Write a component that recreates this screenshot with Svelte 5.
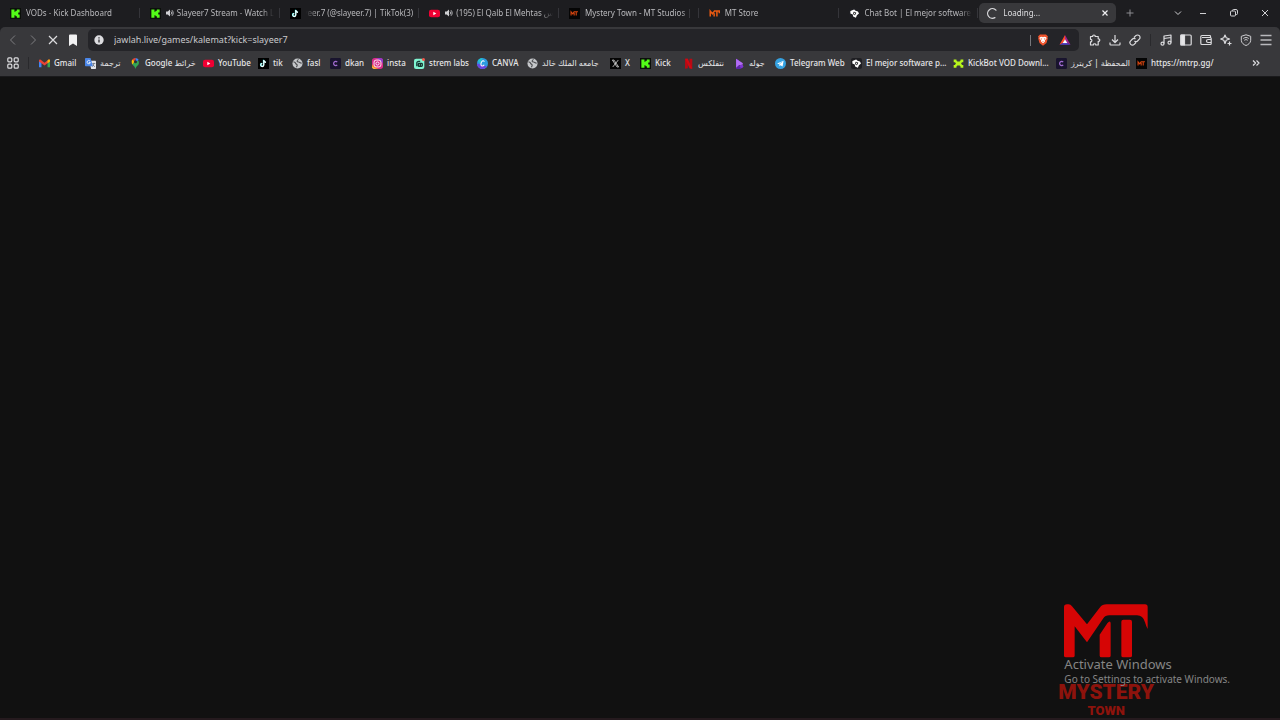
<script lang="ts">
    type Tab = {
        title: string;
        icon: string;
        audio?: boolean;
        active?: boolean;
        fromEnd?: boolean;
    };

    type Bookmark = { label: string; icon: string; width: number };

    const tabs: Tab[] = [
        { title: "VODs - Kick Dashboard", icon: "kick" },
        { title: "Slayeer7 Stream - Watch L", icon: "kick", audio: true },
        { title: "yeer.7 (@slayeer.7) | TikTok(3)", icon: "tiktok", fromEnd: true },
        { title: "(195) El Qalb El Mehtas س", icon: "youtube", audio: true },
        { title: "Mystery Town - MT Studios | M", icon: "mtbox" },
        { title: "MT Store", icon: "mt" },
        { title: "Chat Bot | El mejor software p", icon: "bot" },
        { title: "Loading...", icon: "spinner", active: true },
    ];

    // width is the slot each bookmark takes on the bar
    const bookmarks: Bookmark[] = [
        { label: "Gmail", icon: "gmail", width: 46 },
        { label: "ترجمة", icon: "translate", width: 45 },
        { label: "خرائط Google", icon: "maps", width: 73 },
        { label: "YouTube", icon: "youtube", width: 55 },
        { label: "tik", icon: "tiktok", width: 34 },
        { label: "fasl", icon: "globe", width: 38 },
        { label: "dkan", icon: "creators", width: 42 },
        { label: "insta", icon: "insta", width: 42 },
        { label: "strem labs", icon: "streamlabs", width: 63 },
        { label: "CANVA", icon: "canva", width: 50 },
        { label: "جامعه الملك خالد", icon: "globe", width: 83 },
        { label: "X", icon: "x", width: 30 },
        { label: "Kick", icon: "kick", width: 43 },
        { label: "نتفلكس", icon: "netflix", width: 51 },
        { label: "جوله", icon: "jawlah", width: 41 },
        { label: "Telegram Web", icon: "telegram", width: 76 },
        { label: "El mejor software p...", icon: "bot", width: 102 },
        { label: "KickBot VOD Downl...", icon: "kickbot", width: 103 },
        { label: "المحفظة | كريترز", icon: "creators", width: 80 },
        { label: "https://mtrp.gg/", icon: "mtbox", width: 76 },
    ];

    let url = $state("jawlah.live/games/kalemat?kick=slayeer7");
</script>

{#snippet icon(name: string)}
    <svg class="icon" viewBox="0 0 16 16" aria-hidden="true">
        {#if name === "kick"}
            <rect width="16" height="16" fill="#0b0f0a" />
            <path fill="#53fc18" d="M2 2h4.500v3.500H8V4h2V2h4v4.500h-2v3h2V14h-4v-2H8v-1.500H6.500V14H2z" />
        {:else if name === "tiktok"}
            <rect width="16" height="16" fill="#000" />
            <path d="M8.5 3v7.2a2.2 2.2 0 1 1-2.2-2.2M8.5 3.5c.3 1.7 1.3 2.6 3.2 2.8" fill="none" stroke="#25f4ee" stroke-width="1.8" transform="translate(-.5 -.3)" />
            <path d="M8.5 3v7.2a2.2 2.2 0 1 1-2.2-2.2M8.5 3.5c.3 1.7 1.3 2.6 3.2 2.8" fill="none" stroke="#fff" stroke-width="1.8" />
        {:else if name === "youtube"}
            <rect y="2.5" width="16" height="11" rx="3" fill="#f00033" />
            <path fill="#fff" d="M6.3 5.5v5l4.3-2.5z" />
        {:else if name === "mtbox"}
            <rect width="16" height="16" fill="#050505" />
            <path fill="none" stroke="#d8450f" stroke-width="1.6" d="M3 11V5.5l2.3 3 2.2-3H13M7.5 7v4M10.5 6v5" />
        {:else if name === "mt"}
            <path fill="none" stroke="#e85a12" stroke-width="2.2" d="M1.8 12.5V4.5L5 8.5l3-4h7v3M7.5 7.5v5M11.5 5v7.5" />
        {:else if name === "bot"}
            <rect width="16" height="16" rx="3" fill="#1e1e22" />
            <path fill="#fff" d="M2 4.500l5.500-2.500 2 2L13 5l1.500 3-3 2.500L10 14l-4-1.500-.5-3L2 8z" />
            <path d="M7 6l3 1-1.500 3-2-1z" fill="none" stroke="#17171a" stroke-width="1.200" />
        {:else if name === "spinner"}
            <path d="M13 3.200A7 7 0 1 0 11.500 14" fill="none" stroke="#d7d7da" stroke-width="1.800" stroke-linecap="round" />
        {:else if name === "gmail"}
            <path fill="#4285f4" d="M0 4v9.500h3.600V6z" />
            <path fill="#34a853" d="M16 4v9.500h-3.600V6z" />
            <path fill="#ea4335" d="M0 3.500C0 2 1.500 1.800 2.500 2.500L8 6.800l5.500-4.300C14.500 1.800 16 2 16 3.500V5l-8 6-8-6z" />
            <path fill="#fbbc04" d="M12.400 4l1.100-1.500C15 1.800 16 2.500 16 3.800V5l-3.600 2.700z" />
        {:else if name === "translate"}
            <path fill="#e4e6ea" d="M6 4h9a1 1 0 0 1 1 1v10a1 1 0 0 1-1 1H9z" />
            <path fill="#4a86e8" d="M1 0h7l3.500 12H1a1 1 0 0 1-1-1V1a1 1 0 0 1 1-1z" />
            <path d="M7.300 4.500a2.400 2.400 0 1 0 .5 2H5.500" fill="none" stroke="#fff" stroke-width="1.200" />
            <path d="M10.500 8H15M12.800 7v1c0 2-1 3.500-2 4.500M11.500 9.500c.5 1.500 1.500 2.500 3 3.200" fill="none" stroke="#5a6675" />
        {:else if name === "maps"}
            <path fill="#34a853" d="M3 7c0 4 4 4.500 5 9 1-4.500 5-5 5-9a5 5 0 0 0-1-3.500z" />
            <path fill="#4285f4" d="M8 0a5.500 5.500 0 0 1 4.600 2.500L8 7z" />
            <path fill="#ea4335" d="M3.500 2.200A5.600 5.600 0 0 1 8.500 0L6 6z" />
            <path fill="#fbbc04" d="M3.500 9.500C2 7 2 4 3.500 2.200l3 2.800z" />
            <circle cx="8" cy="5.600" r="2.200" fill="#2d3033" />
        {:else if name === "globe"}
            <circle cx="8" cy="8" r="7.300" fill="#c5c7ca" />
            <path d="M2 5.500c2 .5 3 1 3.500 2.500s2 1 2 2.500-1 2-1 3M9.500 2c-2 1.500-2.500 2-2 3s2 .5 3 1 1.500 1.500 3.500 1.500" fill="none" stroke="#48494c" stroke-width="1.600" />
        {:else if name === "creators"}
            <rect width="16" height="16" rx="2" fill="#19142e" />
            <path d="M10.500 6A3 3 0 1 0 10.500 10" fill="none" stroke="#a06bd0" stroke-width="1.800" />
        {:else if name === "insta"}
            <rect width="16" height="16" rx="4" fill="#d92b8a" />
            <path fill="#f77a35" d="M0 9l9 7H4a4 4 0 0 1-4-4z" />
            <path fill="#f9c544" d="M0 12l6 4H4a4 4 0 0 1-4-4z" />
            <path fill="#9538c8" d="M7 0h5a4 4 0 0 1 4 4v4z" />
            <rect x="3" y="3" width="10" height="10" rx="3" fill="none" stroke="#fff" stroke-width="1.300" />
            <circle cx="8" cy="8" r="2.300" fill="none" stroke="#fff" stroke-width="1.300" />
        {:else if name === "streamlabs"}
            <rect y="1" width="15" height="15" rx="3" fill="#80f5d2" />
            <path d="M4 12V8a3 3 0 0 1 3-3h2" fill="none" stroke="#153e38" stroke-width="1.800" />
            <rect x="5" y="7" width="8" height="6" rx="2" fill="#14352f" />
            <path d="M8 9v2M11 9v2" stroke="#80f5d2" />
            <circle cx="13.800" cy="2.200" r="2.200" fill="#f2554a" />
        {:else if name === "canva"}
            <circle cx="8" cy="8" r="8" fill="#2c9be0" />
            <path fill="#6d43e0" d="M0 8a8 8 0 0 0 8 8c3 0 5-1 6.500-3.500z" />
            <path fill="#22c3cf" d="M1 4.500A8 8 0 0 1 8 0L5 8z" />
            <path d="M10.500 5.500c0-2-2.500-1.800-3.700 0S5 11 7 11.500s3-1 3.500-1.800" fill="none" stroke="#fff" stroke-width="1.500" />
        {:else if name === "x"}
            <rect width="16" height="16" fill="#050505" />
            <path d="M3.500 3h2.300l6.700 10h-2.300zM12 3l-8 10" fill="none" stroke="#e8e8e8" stroke-width="1.100" />
        {:else if name === "netflix"}
            <path fill="#b80a14" d="M3 1h4v14L3 15.500zM9.500 1h4v14.500L9.500 15z" />
            <path fill="#d10812" d="M3 1h4l6.500 14.500L9.500 15z" />
        {:else if name === "jawlah"}
            <path fill="#5c22a8" d="M3 1l4 2v8l6 2-3 3H3z" />
            <path fill="#b26cf5" d="M3 1l10 6.500-1 2.500-5 .5L3 14z" />
            <circle cx="11" cy="12" r="2.500" fill="#7e37ce" />
        {:else if name === "telegram"}
            <circle cx="8" cy="8" r="8" fill="#35a1e0" />
            <path fill="#fff" d="M3 8l9.500-4-1.500 8.500-3-2-1.500 1.500-.3-3z" />
            <path d="M6 9l4.500-3.500" stroke="#35a1e0" stroke-width=".8" />
        {:else if name === "kickbot"}
            <path fill="#b6f51d" d="M1 2h4v2h1v1h4V4h1V2h4v4h-2v1h-1v2h1v1h2v4h-4v-2h-1v-1H6v1H5v2H1v-4h2V9h1V7H3V6H1z" />
        {/if}
    </svg>
{/snippet}

<div class="browser">
    <header>
        <div class="tab-strip">
            <div class="tabs" role="tablist">
                {#each tabs as tab}
                    <button class="tab" class:active={tab.active} role="tab" aria-selected={!!tab.active}>
                        {@render icon(tab.icon)}
                        {#if tab.audio}
                            <svg class="audio" viewBox="0 0 16 16" aria-label="Playing audio">
                                <path fill="currentColor" d="M0 5h3.500L8 1v14l-4.500-4H0z" />
                                <path d="M10 5c1.500 1.500 1.500 4.500 0 6M12 2.500c3 3 3 8 0 11" fill="none" stroke="currentColor" stroke-width="1.800" />
                            </svg>
                        {/if}
                        <span class="title" class:from-end={tab.fromEnd}><span>{tab.title}</span></span>
                        {#if tab.active}
                            <svg class="close" viewBox="0 0 8 8" aria-label="Close tab"><path d="M1.500 1.500l5 5m0-5l-5 5" /></svg>
                        {/if}
                    </button>
                {/each}
            </div>
            <button class="new-tab" aria-label="New tab">
                <svg class="line dim" viewBox="0 0 12 12"><path d="M6 2.500v7M2.500 6h7" /></svg>
            </button>
            <div class="window-buttons">
                <button class="search-tabs" aria-label="Search tabs">
                    <svg class="line" viewBox="0 0 12 12"><path d="M3 4.500l3 3 3-3" /></svg>
                </button>
                <button aria-label="Minimize"><svg class="line" viewBox="0 0 12 12"><path d="M3 6.500h6" /></svg></button>
                <button aria-label="Restore">
                    <svg class="line" viewBox="0 0 12 12"><rect x="2.500" y="4" width="5" height="5" rx="1" /><path d="M4.500 4V3.500a1 1 0 0 1 1-1H8a1.500 1.500 0 0 1 1.500 1.500v2.500a1 1 0 0 1-1 1H8" /></svg>
                </button>
                <button aria-label="Close"><svg class="line" viewBox="0 0 12 12"><path d="M3 3l6 6m0-6l-6 6" /></svg></button>
            </div>
        </div>

        <div class="toolbar">
            <button aria-label="Back" disabled><svg class="line" viewBox="0 0 12 12"><path d="M8 1.500L3.500 6 8 10.500" /></svg></button>
            <button aria-label="Forward" disabled><svg class="line" viewBox="0 0 12 12"><path d="M4 1.500L8.500 6 4 10.500" /></svg></button>
            <button aria-label="Stop"><svg class="line strong" viewBox="0 0 12 12"><path d="M2 2l8 8m0-8l-8 8" /></svg></button>
            <button aria-label="Bookmark"><svg viewBox="0 0 12 12"><path fill="#f2f2f3" d="M3 .5h6a1 1 0 0 1 1 1V12L6 9.500 2 12V1.500a1 1 0 0 1 1-1z" /></svg></button>
            <div class="address">
                <svg class="info" viewBox="0 0 16 16"><circle cx="8" cy="8" r="7.500" fill="#dcdce0" /><path d="M8 7v5M8 3.500v2" stroke="#27272b" stroke-width="2" /></svg>
                <input type="text" aria-label="Address" spellcheck="false" bind:value={url} />
                <span class="divider light"></span>
                <button aria-label="Brave Shields">
                    <svg viewBox="0 0 12 12">
                        <path fill="#f0532b" d="M3 .5h6l2 2-.5 1 .3 1L9.500 9 6 11.800 2.500 9 1.200 4.500l.3-1-.5-1z" />
                        <path fill="#fff" d="M2.800 3.200l2-.4L6 3.200l1.200-.4 2 .4.3 1.300-1.700 2 .2 1L6 9.200 4 7.500l.2-1-1.700-2z" />
                        <path fill="#f0532b" d="M3.500 4.300l1.800.5-.8 1zM8.500 4.300l-1.800.5.8 1zM5 7h2l-1 .8z" />
                    </svg>
                </button>
                <button class="rewards" aria-label="Brave Rewards">
                    <svg viewBox="0 0 12 12">
                        <path fill="#ff4724" d="M6 1v4.500L3.800 9 .5 10.800z" />
                        <path fill="#a0218c" d="M6 1l5.500 9.800L8.200 9 6 5.500z" />
                        <path fill="#5640c8" d="M.5 10.800L3.800 9h4.400l3.300 1.800z" />
                        <path fill="#fff" d="M6 5.200L8.300 9H3.700z" />
                    </svg>
                </button>
            </div>
            <button aria-label="Extensions">
                <svg class="line strong" viewBox="0 0 12 12"><path d="M1.500 2.500h2.200c-.3-2 2.800-2 2.500 0h3v2.300c2.100-.3 2.100 2.900 0 2.600v3.600H6.800c.2-1.700-2.700-1.700-2.400 0H1.500V7.800c1.800.2 1.800-2.700 0-2.500z" /></svg>
            </button>
            <button aria-label="Downloads"><svg class="line strong" viewBox="0 0 12 12"><path d="M6 1v7M3 5.500l3 3 3-3M1 8.500v1.700c0 .5.300.8.800.8h8.400c.5 0 .8-.3.800-.8V8.500" /></svg></button>
            <button aria-label="Copy link"><svg class="line strong" viewBox="0 0 12 12"><path d="M5 3.500l1.800-1.800a2.400 2.400 0 0 1 3.500 3.500L8.500 7a2.200 2.200 0 0 1-3 0M7 8.500l-1.800 1.800a2.400 2.400 0 0 1-3.500-3.500L3.500 5a2.200 2.200 0 0 1 3 0" /></svg></button>
            <span class="divider"></span>
            <button aria-label="Playlist"><svg class="line strong" viewBox="0 0 12 12"><path d="M4 9.500V2l7-1v7.500M4 4.500l7-1" /><circle cx="2.500" cy="9.700" r="1.500" /><circle cx="9.500" cy="8.700" r="1.500" /></svg></button>
            <button aria-label="Sidebar"><svg class="line strong" viewBox="0 0 12 12"><rect x=".8" y="1" width="10.400" height="10" rx="1" /><path fill="#e6e6e8" d="M1 1h3.500v10H1z" /></svg></button>
            <button aria-label="Wallet"><svg class="line strong" viewBox="0 0 12 12"><path d="M10.500 3.500V2.300c0-.5-.3-.8-.8-.8H2A1.200 1.200 0 0 0 .8 2.700v6.500c0 .8.500 1.300 1.200 1.300h8.200c.6 0 1-.4 1-1V4.500c0-.6-.4-1-1-1H2M11 5.500H8a1.500 1.500 0 0 0 0 3h3" /></svg></button>
            <button aria-label="Leo AI"><svg class="line strong" viewBox="0 0 12 12"><path d="M5 1l1.200 2.800L9.500 5 6.200 6.200 5 9.500 3.800 6.200.7 5l3.100-1.200zM9.500 7.500v4M7.500 9.500h4" /></svg></button>
            <button aria-label="VPN"><svg class="line" viewBox="0 0 12 12"><path d="M6 .8l4.700 1.500v4C10.700 9 8 10.800 6 11.500 4 10.800 1.300 9 1.300 6.300v-4z" /><path d="M3.300 4.500c1.500-1.300 3.900-1.300 5.400 0M4.300 6.300c1-.9 2.400-.9 3.400 0M6 8v.3" /></svg></button>
            <button aria-label="Menu"><svg class="menu" viewBox="0 0 12 12"><path d="M.5 1.500h11M.5 6h11M.5 10.500h11" /></svg></button>
        </div>

        <nav class="bookmarks" aria-label="Bookmarks">
            <button class="apps" aria-label="Apps">
                <svg class="line strong" viewBox="0 0 12 12"><rect x=".8" y=".8" width="4" height="4" rx="1" /><rect x="7.200" y=".8" width="4" height="4" rx="1" /><rect x=".8" y="7.200" width="4" height="4" rx="1" /><rect x="7.200" y="7.200" width="4" height="4" rx="1" /></svg>
            </button>
            <span class="divider"></span>
            <div class="bookmark-list">
                {#each bookmarks as bookmark}
                    <a href="#{bookmark.icon}" style:width="{bookmark.width}px">
                        {@render icon(bookmark.icon)}
                        <span dir="auto">{bookmark.label}</span>
                    </a>
                {/each}
            </div>
            <button class="more" aria-label="More bookmarks"><svg class="line strong" viewBox="0 0 12 12"><path d="M3 3.500L5.500 6 3 8.500M6.500 3.500L9 6 6.500 8.500" /></svg></button>
        </nav>
    </header>

    <main></main>

    <div class="watermark">
        <svg class="logo" viewBox="0 0 252 160" role="img" aria-label="MT">
            <path fill="#d60505" d="M0 154V8Q0 0 9 0H14Q20 0 24 6L69 60 107 10Q115 0 128 0H243Q251 0 251 8V74Q247 68 243 54 237 33 219 33H136Q124 33 117 43L69 114 32 66V154Q32 159 26 159H6Q0 159 0 154z" />
            <path fill="#d60505" d="M107 91L130 57Q139 46 140 57V154Q140 159 134 159H113Q107 159 107 154zM172 52Q172 46 178 46H198Q204 46 204 52V154Q204 159 198 159H178Q172 159 172 154z" />
        </svg>
        <span class="mystery">MYSTERY</span>
        <span class="town">TOWN</span>
    </div>
    <div class="activate">
        <strong>Activate Windows</strong>
        <span>Go to Settings to activate Windows.</span>
    </div>
</div>

<style>
    :global(body) {
        margin: 0;
        background: #111;
    }
    .browser {
        position: relative;
        display: flex;
        flex-direction: column;
        min-height: 100vh;
        box-sizing: border-box;
        overflow: hidden;
        border-bottom: 2px solid #251a1e;
        background: #111;
        color: #dedee1;
        font-family: "Noto Sans", "DejaVu Sans", sans-serif;
        font-size: 8px;
        line-height: 12px;
    }
    header {
        background: #1d1d20;
    }
    button {
        display: flex;
        align-items: center;
        justify-content: center;
        flex: none;
        padding: 0;
        border: none;
        background: none;
        color: inherit;
        font: inherit;
    }
    svg {
        display: block;
        flex: none;
        width: 12px;
        height: 12px;
    }
    .icon {
        width: 11px;
        height: 11px;
    }
    .line {
        fill: none;
        stroke: #cfcfd2;
        stroke-width: 1;
        stroke-linejoin: round;
    }
    .strong {
        stroke: #dcdcdf;
        stroke-width: 1.2;
    }
    .dim {
        stroke: #8c8c90;
    }
    .menu {
        fill: none;
        stroke: #b9b9bd;
        stroke-width: 1.3;
    }
    .divider {
        flex: none;
        width: 1px;
        height: 12px;
        background: #29292c;
    }
    .divider.light {
        height: 11px;
        background: #77777b;
    }

    .tab-strip {
        display: flex;
        align-items: center;
        height: 26px;
        padding-bottom: 1px;
    }
    .tabs {
        display: flex;
        flex: 0 1 1118px;
        min-width: 0;
    }
    .tab {
        position: relative;
        flex: 1 1 100px;
        justify-content: flex-start;
        gap: 5px;
        min-width: 0;
        height: 20px;
        padding: 0 6px 0 10px;
        color: #b9b9bc;
    }
    .tab:not(.active)::after {
        content: "";
        position: absolute;
        right: 0;
        width: 1px;
        height: 10px;
        background: #35353a;
    }
    .tab.active {
        flex-basis: 97px;
        margin: 0 2px 0 1px;
        padding: 0 7px 0 8px;
        border-radius: 5px;
        background: #38383b;
        color: #dedee1;
    }
    .audio {
        width: 8px;
        height: 8px;
        margin-right: -2px;
        color: #cfcfd2;
    }
    .title {
        display: flex;
        flex: 1;
        min-width: 0;
        overflow: hidden;
        white-space: nowrap;
        mask-image: linear-gradient(to left, transparent, #000 12px);
    }
    .title.from-end {
        justify-content: flex-end;
        mask-image: linear-gradient(to right, transparent, #000 12px);
    }
    .close {
        width: 8px;
        height: 8px;
        stroke: #f0f0f2;
        stroke-width: 1.2;
    }
    .new-tab {
        width: 24px;
        height: 20px;
    }
    .window-buttons {
        display: flex;
        margin-left: auto;
    }
    .window-buttons button {
        width: 31px;
        height: 26px;
    }
    .window-buttons .search-tabs {
        width: 18px;
    }

    .toolbar {
        display: flex;
        align-items: center;
        height: 26px;
        padding: 0 4px 0 3px;
        border-radius: 5px 5px 0 0;
        background: #38383b;
    }
    .toolbar button {
        width: 20px;
        height: 22px;
    }
    .toolbar button:disabled {
        opacity: 0.45;
    }
    .address {
        display: flex;
        align-items: center;
        flex: 1;
        min-width: 0;
        height: 22px;
        margin: 0 6px 0 5px;
        border-radius: 5px;
        background: #242428;
    }
    .info {
        width: 10px;
        height: 10px;
        margin: 0 10px 0 6px;
    }
    .address input {
        flex: 1;
        min-width: 0;
        padding: 0;
        border: none;
        outline: none;
        background: none;
        color: #c9c9cc;
        font: inherit;
        font-size: 9px;
    }
    .address button {
        width: 24px;
    }
    .address .rewards {
        width: 20px;
        margin-right: 4px;
    }
    .toolbar > .divider {
        margin: 0 5px;
    }

    .bookmarks {
        display: flex;
        align-items: center;
        height: 20px;
        padding: 0 18px 3px 7px;
        border-bottom: 1px solid #1a1a1c;
        background: #38383b;
    }
    .apps {
        margin-right: 9px;
    }
    .bookmark-list {
        display: flex;
        flex: 1;
        min-width: 0;
        margin-left: 10px;
        overflow: hidden;
    }
    .bookmark-list a {
        display: flex;
        align-items: center;
        flex: none;
        gap: 4px;
        color: #e6e6e8;
        font-weight: 500;
        white-space: nowrap;
        text-decoration: none;
    }

    main {
        flex: 1;
    }
    .watermark {
        position: absolute;
        right: 126px;
        bottom: -2px;
        display: flex;
        flex-direction: column;
        align-items: center;
        color: #8d130c;
        font-family: Roboto, sans-serif;
        font-weight: 900;
    }
    .logo {
        width: 84px;
        height: 54px;
    }
    .mystery {
        margin-top: 24px;
        font-size: 21px;
        line-height: 20px;
    }
    .town {
        font-size: 13px;
        line-height: 18px;
    }
    .activate {
        position: absolute;
        right: 50px;
        bottom: 32px;
        display: flex;
        flex-direction: column;
        color: #858585;
        font-size: 10px;
        line-height: 14px;
    }
    .activate strong {
        font-size: 13px;
        font-weight: 400;
        line-height: 16px;
    }
</style>
